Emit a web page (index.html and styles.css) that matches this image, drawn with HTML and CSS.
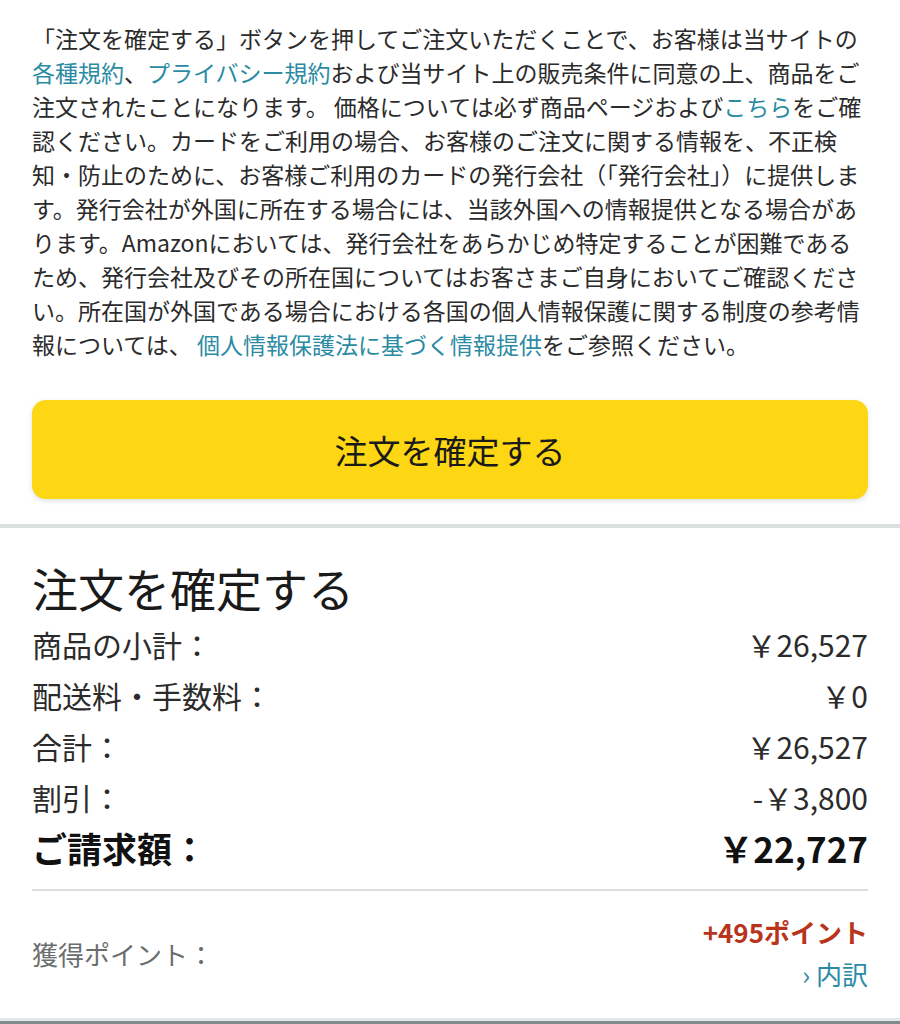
FILE: index.html
```html
<!DOCTYPE html>
<html lang="ja">
<head>
  <meta charset="UTF-8">
  <meta name="viewport" content="width=device-width, initial-scale=1.0">
  <title>注文を確定する</title>
  <link rel="stylesheet" href="styles.css">
</head>
<body>
  <div class="terms">
    <p class="terms-text">「注文を確定する」ボタンを押してご注文いただくことで、お客様は当サイトの<a href="#">各種規約</a>、<a href="#">プライバシー規約</a>および当サイト上の販売条件に同意の上、商品をご注文されたことになります。 価格については必ず商品ページおよび<a href="#">こちら</a>をご確認ください。カードをご利用の場合、お客様のご注文に関する情報を、不正検<br>知・防止のために、お客様ご利用のカードの発行会社（「発行会社」）に提供します。発行会社が外国に所在する場合には、当該外国への情報提供となる場合があります。Amazonにおいては、発行会社をあらかじめ特定することが困難であるため、発行会社及びその所在国についてはお客さまご自身においてご確認ください。所在国が外国である場合における各国の個人情報保護に関する制度の参考情報については、 <a href="#">個人情報保護法に基づく情報提供</a>をご参照ください。</p>

    <button class="place-order">注文を確定する</button>
  </div>

  <div class="summary">
    <h2 class="summary-title">注文を確定する</h2>

    <div class="summary-row">
      <span>商品の小計：</span>
      <span>￥26,527</span>
    </div>
    <div class="summary-row">
      <span>配送料・手数料：</span>
      <span>￥0</span>
    </div>
    <div class="summary-row">
      <span>合計：</span>
      <span>￥26,527</span>
    </div>
    <div class="summary-row">
      <span>割引：</span>
      <span>-￥3,800</span>
    </div>
    <div class="summary-row total">
      <span>ご請求額：</span>
      <span>￥22,727</span>
    </div>

    <div class="points">
      <span class="points-label">獲得ポイント：</span>
      <div class="points-value">
        <span class="points-amount">+495ポイント</span>
        <a href="#" class="points-link">› 内訳</a>
      </div>
    </div>
  </div>

  <div class="section-end"></div>
</body>
</html>
```

FILE: styles.css
```css
body {
  margin: 0;
  font-family: "Noto Sans CJK JP", "Noto Sans", sans-serif;
  color: #2b2b2b;
  background: #fff;
}
a {
  color: #2a8ba3;
  text-decoration: none;
}
.terms {
  padding: 21px 32px 25px;
}
.terms-text {
  margin: 0;
  font-size: 23px;
  line-height: 34px;
}
.place-order {
  display: block;
  width: 100%;
  height: 99px;
  margin-top: 39px;
  border: none;
  border-radius: 14px;
  background-color: #fdd614;
  box-shadow: 0 2px 5px rgba(200, 204, 204, 0.6);
  font-family: inherit;
  font-size: 33px;
  color: #1a1a1a;
  cursor: pointer;
}
.summary {
  border-top: 4px solid #dcdfdf;
  padding: 32px 32px 23px;
}
.summary-title {
  margin: 0 0 4px;
  font-size: 46px;
  font-weight: normal;
  line-height: 54px;
  color: #1a1a1a;
}
.summary-row {
  display: flex;
  justify-content: space-between;
  align-items: center;
  height: 51px;
  font-size: 30px;
  color: #2b2b2b;
}
.summary-row.total {
  font-size: 35px;
  font-weight: bold;
  color: #111;
}
.points {
  display: flex;
  justify-content: space-between;
  align-items: center;
  margin-top: 16px;
  padding-top: 20px;
  border-top: 2px solid #dcdddd;
  font-size: 26px;
}
.points-label {
  color: #6a6d6d;
}
.points-value {
  display: flex;
  flex-direction: column;
  align-items: flex-end;
  line-height: 42px;
}
.points-amount {
  font-weight: bold;
  color: #b8341a;
}
.section-end {
  height: 3px;
  border-top: 3px solid #e4e7e7;
  background: #838a8a;
}
```
